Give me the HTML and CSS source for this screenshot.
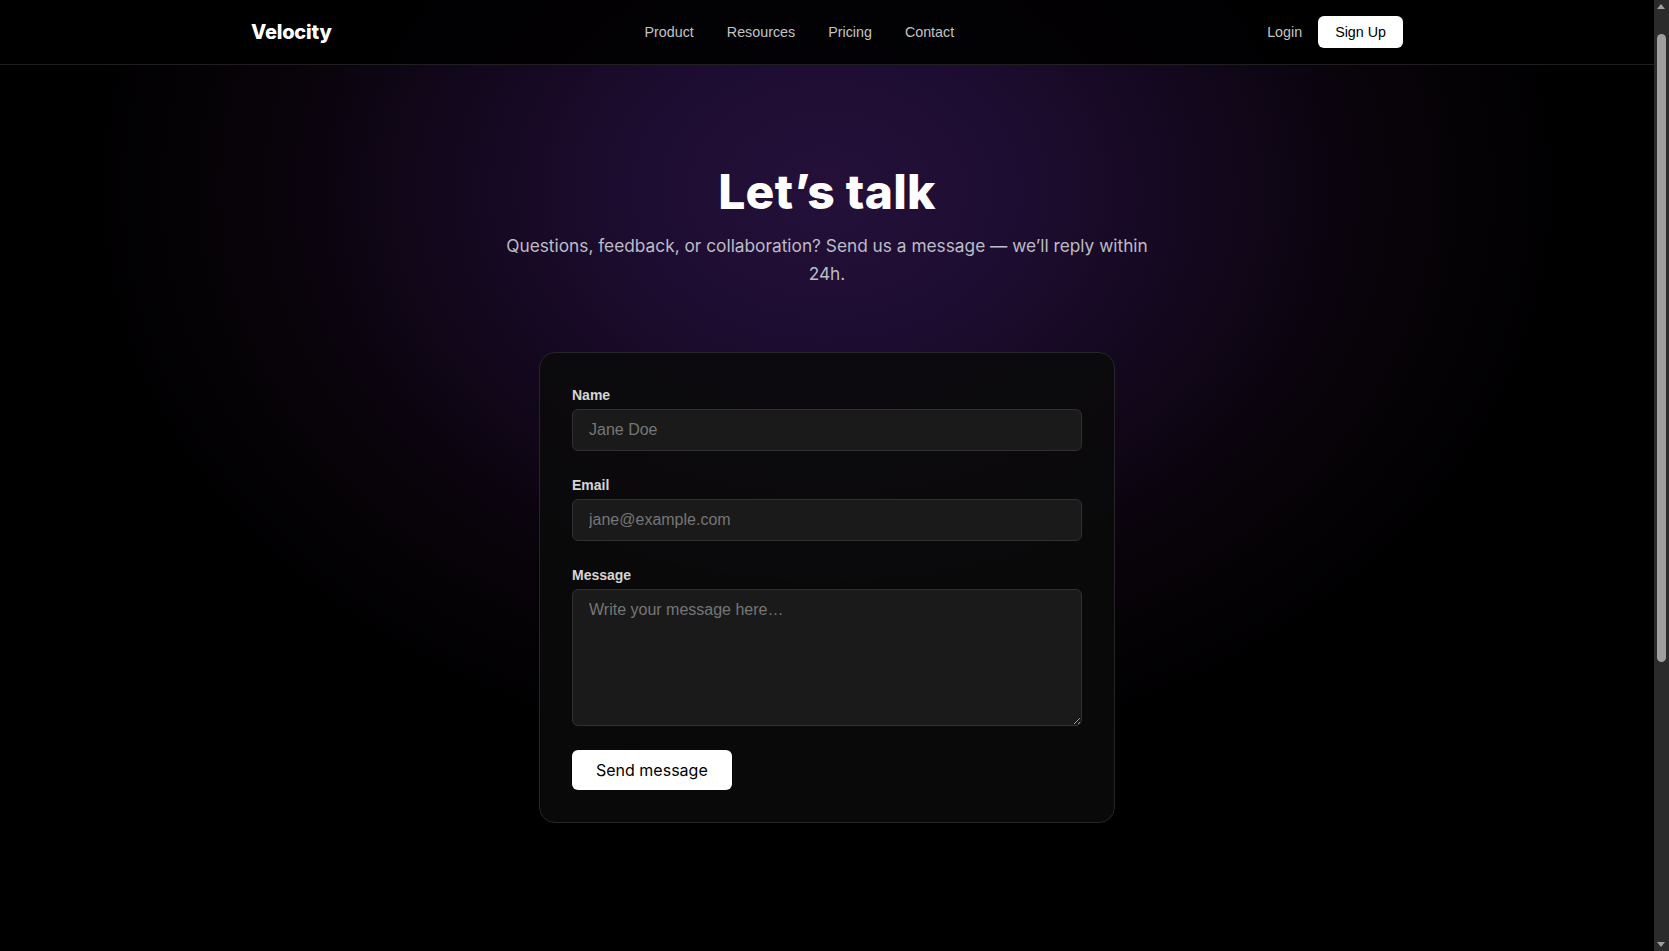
FILE: index.html
```html
<!DOCTYPE html>
<html lang="en">
<head>
<meta charset="utf-8">
<title>Contact — Velocity</title>
<link rel="stylesheet" href="styles.css">
</head>
<body>
<div class="page">
  <header class="nav">
    <div class="nav-inner">
      <a class="logo" href="#">Velocity</a>
      <nav class="links">
        <a href="#">Product</a>
        <a href="#">Resources</a>
        <a href="#">Pricing</a>
        <a href="#">Contact</a>
      </nav>
      <div class="auth">
        <a class="login" href="#">Login</a>
        <a class="signup" href="#">Sign Up</a>
      </div>
    </div>
  </header>

  <main class="hero">
    <h1 class="title">Let’s talk</h1>
    <p class="subtitle">Questions, feedback, or collaboration? Send us a message — we’ll reply within 24h.</p>

    <form class="card">
      <div class="field">
        <label for="name">Name</label>
        <input id="name" type="text" placeholder="Jane Doe">
      </div>
      <div class="field">
        <label for="email">Email</label>
        <input id="email" type="email" placeholder="jane@example.com">
      </div>
      <div class="field">
        <label for="message">Message</label>
        <textarea id="message" rows="5" placeholder="Write your message here…"></textarea>
      </div>
      <div class="actions">
        <button type="button" class="send">Send message</button>
      </div>
    </form>
  </main>
</div>

<div class="scrollbar" aria-hidden="true">
  <span class="sb-arrow sb-up"></span>
  <span class="sb-thumb"></span>
  <span class="sb-arrow sb-down"></span>
</div>
</body>
</html>
```

FILE: styles.css
```css
:root {
  color-scheme: dark;
}

* {
  box-sizing: border-box;
}

html, body {
  margin: 0;
  padding: 0;
}

body {
  background: #000;
  color: #fff;
  font-family: "Liberation Sans", Arial, sans-serif;
}

.page {
  margin-right: 15px;
  background:
    radial-gradient(ellipse 760px 590px at 50% 190px,
      #241039 0%,
      #1e0d32 24%,
      #14081f 48%,
      #080309 74%,
      rgba(0, 0, 0, 0) 100%),
    #000;
  min-height: 100vh;
}

/* NAV */
.nav {
  height: 65px;
  border-bottom: 1px solid #1f1f1f;
  background: rgba(0, 0, 0, 0.9);
}

.nav-inner {
  max-width: 1152px;
  height: 64px;
  margin: 0 auto;
  display: flex;
  align-items: center;
  justify-content: space-between;
}

.logo {
  font-family: Inter, "Liberation Sans", sans-serif;
  font-weight: 800;
  font-size: 20px;
  line-height: 28px;
  letter-spacing: -0.2px;
  color: #fff;
  text-decoration: none;
}

.links {
  display: flex;
  gap: 33px;
}

.links a,
.login {
  font-size: 14.3px;
  line-height: 20px;
  color: #c4c4c4;
  text-decoration: none;
}

.auth {
  display: flex;
  align-items: center;
  gap: 16px;
}

.signup {
  display: inline-block;
  background: #fff;
  color: #000;
  font-size: 14.3px;
  line-height: 20px;
  padding: 6px 17px;
  border-radius: 6px;
  text-decoration: none;
}

/* HERO */
.hero {
  display: flex;
  flex-direction: column;
  align-items: center;
  padding: 103px 24px 560px;
}

.title {
  margin: 0;
  font-family: Inter, "Liberation Sans", sans-serif;
  font-weight: 800;
  font-size: 48px;
  line-height: 48px;
  letter-spacing: 0.3px;
  color: #fff;
}

.subtitle {
  margin: 16px 0 0;
  max-width: 672px;
  text-align: center;
  font-family: Inter, "Liberation Sans", sans-serif;
  font-size: 17.3px;
  line-height: 28px;
  color: #bdbdc6;
}

/* CARD */
.card {
  margin-top: 64px;
  width: 576px;
  padding: 32px;
  border: 1px solid #262528;
  border-radius: 16px;
  background: rgba(10, 10, 10, 0.88);
  display: flex;
  flex-direction: column;
  gap: 24px;
}

.field {
  display: flex;
  flex-direction: column;
  gap: 4px;
}

.field label {
  font-size: 14px;
  line-height: 20px;
  font-weight: 700;
  color: #d6d6d6;
}

.field input,
.field textarea {
  width: 100%;
  font-family: "Liberation Sans", Arial, sans-serif;
  font-size: 16px;
  line-height: 24px;
  padding: 8px 16px;
  color: #eee;
  background: #1a1a1a;
  border: 1px solid #303030;
  border-radius: 6px;
  outline: none;
}

.field textarea {
  height: 137px;
  resize: vertical;
  display: block;
}

.field input::placeholder,
.field textarea::placeholder {
  color: #767676;
}

.actions {
  display: flex;
}

.send {
  font-family: Inter, "Liberation Sans", sans-serif;
  font-size: 16px;
  line-height: 24px;
  padding: 8px 24px;
  background: #fff;
  color: #000;
  border: none;
  border-radius: 6px;
  cursor: pointer;
}

/* Window scrollbar (drawn over the right edge) */
.scrollbar {
  position: fixed;
  top: 0;
  right: 0;
  width: 15px;
  height: 100vh;
  background: #2b2b2b;
}

.sb-thumb {
  position: absolute;
  top: 34px;
  left: 3px;
  width: 9px;
  height: 628px;
  border-radius: 5px;
  background: #9f9f9f;
}

.sb-arrow {
  position: absolute;
  left: 3px;
  width: 0;
  height: 0;
  border-left: 4.5px solid transparent;
  border-right: 4.5px solid transparent;
}

.sb-up {
  top: 4px;
  border-bottom: 5px solid #9f9f9f;
}

.sb-down {
  bottom: 4px;
  border-top: 5px solid #9f9f9f;
}
```
